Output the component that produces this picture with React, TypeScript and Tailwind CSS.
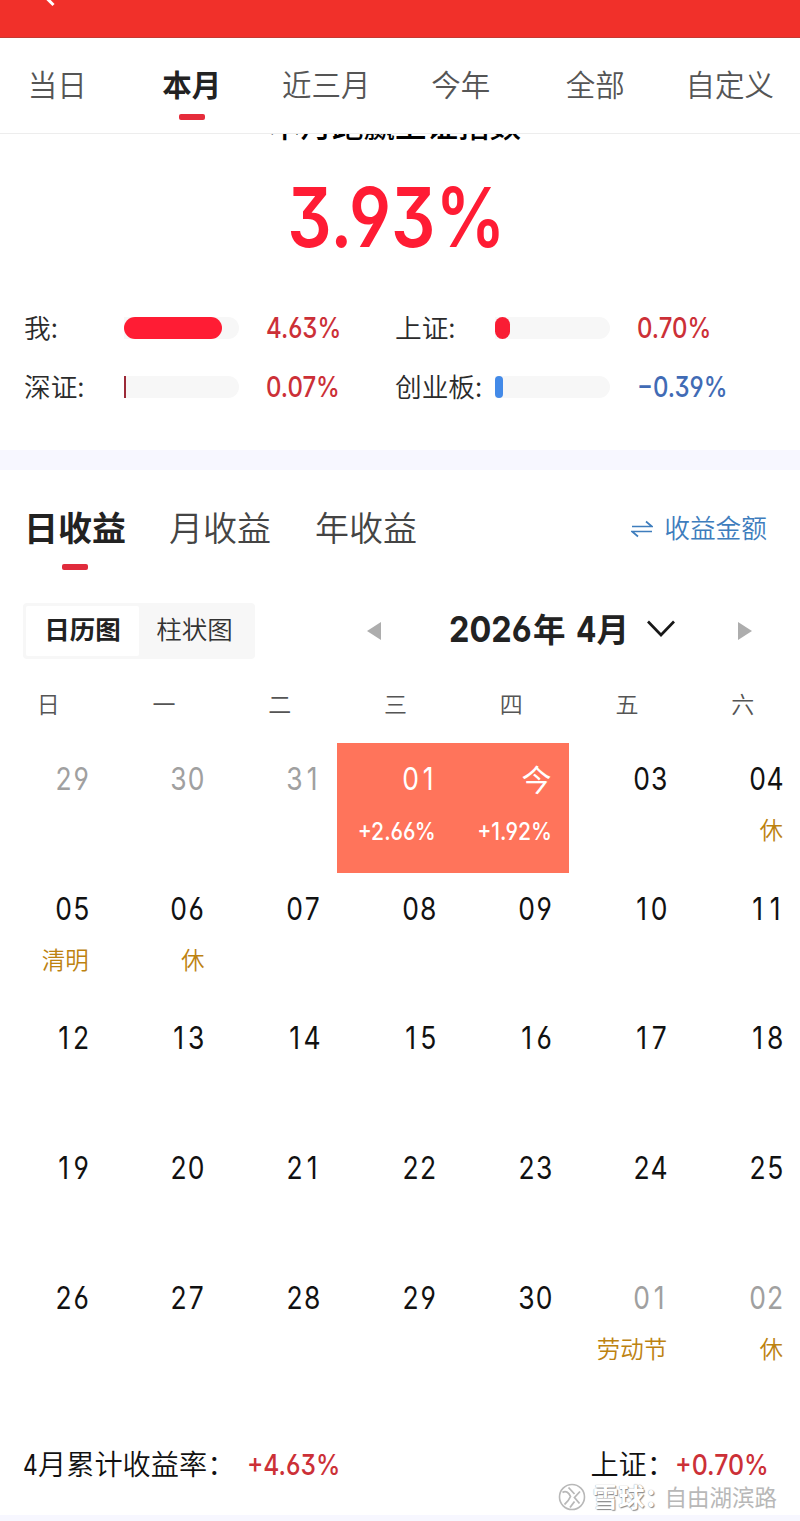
import React from "react";

const periods = ["当日", "本月", "近三月", "今年", "全部", "自定义"];
const weekdays = ["日", "一", "二", "三", "四", "五", "六"];

type Day = { label: string; note?: string; kind?: "muted" | "gain" };

const days: Day[] = [
  { label: "29", kind: "muted" },
  { label: "30", kind: "muted" },
  { label: "31", kind: "muted" },
  { label: "01", note: "+2.66%", kind: "gain" },
  { label: "今", note: "+1.92%", kind: "gain" },
  { label: "03" },
  { label: "04", note: "休" },
  { label: "05", note: "清明" },
  { label: "06", note: "休" },
  ...Array.from({ length: 24 }, (_, i) => ({ label: String(i + 7).padStart(2, "0") })),
  { label: "01", note: "劳动节", kind: "muted" },
  { label: "02", note: "休", kind: "muted" },
];

const numFont =
  "font-['Inter','Noto_Sans_CJK_SC',sans-serif] [font-feature-settings:'cv03','cv04','cv09']";

function Figure({ text, className }: { text: string; className: string }) {
  return (
    <span className={`${numFont} inline-block whitespace-nowrap ${className}`}>
      {text}
    </span>
  );
}

function Stat({ label, value, bar, tone }: { label: string; value: string; bar: string; tone: string }) {
  return (
    <div className="flex h-[58.5px] w-[371px] items-center">
      <span className="w-[100px] whitespace-nowrap pb-px text-[26.7px] font-[350] leading-none text-[#2b2b2b]">{label}</span>
      <div className="h-[22px] w-[115px] overflow-hidden rounded-r-full rounded-l-[9px] bg-[#f7f7f7]">
        <div className={`h-full ${bar}`} />
      </div>
      <Figure text={value} className={`ml-[27px] origin-left scale-x-[0.855] text-[28px] font-medium leading-none ${tone}`} />
    </div>
  );
}

function DayCell({ day }: { day: Day }) {
  const gain = day.kind === "gain";
  const color = gain ? "text-white" : day.kind === "muted" ? "text-[#a0a0a0]" : "text-[#111]";
  return (
    <div className={`flex h-[129.6px] flex-col items-end pr-[16px] ${gain ? "bg-[#ff745b]" : ""}`}>
      {day.label === "今" ? (
        <div className={`mt-[18px] flex h-9 items-center pb-[3px] pr-px text-[30px] leading-none ${color}`}>今</div>
      ) : (
        <div
          className={`mt-[18px] flex h-9 origin-right scale-x-[0.84] items-center font-['Inter',sans-serif] text-[31.5px] leading-none [font-feature-settings:'cv03','cv04'] ${color}`}
        >
          {day.label.split("").map((digit, i) => (
            <span key={i} className="w-[21px] text-center">{digit}</span>
          ))}
        </div>
      )}
      {day.note && (
        <div className="mt-[17px] flex h-8 items-center pr-px">
          {gain ? (
            <Figure text={day.note} className="origin-right scale-x-[0.88] pt-[3px] text-[24px] font-medium leading-none text-white" />
          ) : (
            <span className="text-[23.5px] font-[350] leading-none text-[#bd8210]">{day.note}</span>
          )}
        </div>
      )}
    </div>
  );
}

export default function App() {
  return (
    <div className="flex h-[1521px] w-[800px] flex-col overflow-hidden bg-white font-['Noto_Sans_CJK_SC',sans-serif] text-[#222]">
      <header className="h-[38px] shrink-0 border-b border-[#c53a32] bg-[#f1302a]">
        <svg className="ml-10 block" width="20" height="8" viewBox="0 0 20 8" fill="none">
          <path d="M5.5-3 13.5 5" stroke="white" strokeWidth="3" />
        </svg>
      </header>

      <nav className="-ml-[10px] flex h-[96px] w-[810px] shrink-0 border-b border-[#ededed] pr-[3px]">
        {periods.map((p) => (
          <div key={p} className="flex flex-1 flex-col items-center pt-[30px]">
            <span
              className={`whitespace-nowrap text-[29.5px] leading-[30px] ${
                p === "本月" ? "font-bold text-[#222]" : "font-[350] text-[#555]"
              }`}
            >
              {p}
            </span>
            {p === "本月" && <i className="mt-[16px] h-[6px] w-[26px] rounded-[2px] bg-[#e62c3b]" />}
          </div>
        ))}
      </nav>

      <section className="flex h-[316px] shrink-0 flex-col overflow-hidden">
        <div className="-mt-[25px] h-[33px] shrink-0 pr-[10px] text-center text-[31.5px] font-medium leading-[28px] text-black">
          本月跑赢上证指数
        </div>
        <div className="mt-[35px] flex h-[82px] justify-center pr-[8px]">
          <Figure text="3.93%" className="scale-x-[0.85] text-[82px] font-semibold leading-[82px] text-[#ff1c34]" />
        </div>
        <div className="ml-6 mt-[40px] flex w-[742px] flex-wrap">
          <Stat label="我:" value="4.63%" bar="w-[98px] rounded-full bg-[#ff1c34]" tone="text-[#cc3037]" />
          <Stat label="上证:" value="0.70%" bar="w-[15px] rounded-full bg-[#f91d34]" tone="text-[#cc3037]" />
          <Stat label="深证:" value="0.07%" bar="w-[2px] bg-[#9c2a38]" tone="text-[#cc3037]" />
          <Stat label="创业板:" value="−0.39%" bar="w-[8px] rounded-full bg-[#438ae8]" tone="text-[#416bb5]" />
        </div>
      </section>

      <div className="h-[20px] shrink-0 bg-[#f7f7ff]" />

      <div className="flex h-[133px] shrink-0 items-start pl-6 pr-[33px] pt-[40px] text-[34px] leading-[34px]">
        <div className="flex w-[102px] flex-col items-center">
          <span className="whitespace-nowrap font-bold">日收益</span>
          <i className="mt-[20px] h-[6px] w-[26px] rounded-[2px] bg-[#e02b3c]" />
        </div>
        <span className="ml-[43px] font-[350] text-[#444]">月收益</span>
        <span className="ml-[44px] font-[350] text-[#444]">年收益</span>
        <div className="ml-auto flex items-center gap-[11px] text-[#3e7dbd]">
          <svg className="mt-[3px]" width="22" height="18" viewBox="0 0 22 18" fill="none" stroke="currentColor" strokeWidth="1.7">
            <path d="M1 6.5H21L15 1.5M21 11.5H1L7 16.5" />
          </svg>
          <span className="text-[25.7px] font-[350]">收益金额</span>
        </div>
      </div>

      <div className="flex h-[56px] shrink-0 items-center pl-[23px]">
        <div className="flex h-[56px] w-[232px] rounded-[4px] bg-[#f7f7f7] p-[3px] text-[25.5px] leading-[44px]">
          <div className="w-[113px] rounded-[2px] bg-white text-center font-bold">日历图</div>
          <div className="w-[113px] pr-[2px] text-center font-[350] text-[#333]">柱状图</div>
        </div>
        <svg className="ml-[112px]" width="14" height="18" viewBox="0 0 14 18">
          <path d="M0 9 14 0V18Z" fill="#adadad" />
        </svg>
        <div className="ml-[68px] flex items-center whitespace-nowrap pb-[6px] text-[32.5px] font-bold leading-none">
          <span className="w-[84px] pt-px">
            <span className="inline-block origin-left scale-x-[0.9] font-['Inter',sans-serif] text-[36px] leading-none [font-feature-settings:'cv03','cv04']">2026</span>
          </span>
          <span className="mr-[10px]">年</span>
          <span className="w-[21px] pt-px">
            <span className="inline-block origin-left scale-x-[0.84] font-['Inter',sans-serif] text-[36px] leading-none">4</span>
          </span>
          <span>月</span>
        </div>
        <svg className="-mt-1 ml-[18px]" width="28" height="18" viewBox="0 0 28 18" fill="none">
          <path d="M1 1.5 14 15 27 1.5" stroke="#181818" strokeWidth="2.7" />
        </svg>
        <svg className="ml-auto mr-[48px]" width="14" height="18" viewBox="0 0 14 18">
          <path d="M14 9 0 0V18Z" fill="#adadad" />
        </svg>
      </div>

      <div className="-ml-[10px] grid h-[84px] w-[810px] shrink-0 grid-cols-7 pt-[32px] text-center text-[23px] font-[350] leading-[24px] text-[#555]">
        {weekdays.map((d) => (
          <span key={d} className="pl-px">{d}</span>
        ))}
      </div>

      <div className="-ml-[10px] grid w-[810px] shrink-0 grid-cols-7">
        {days.map((d, i) => (
          <DayCell key={i} day={d} />
        ))}
      </div>

      <footer className="flex h-[124px] shrink-0 flex-col pt-[54px]">
        <div className="flex h-[40px] items-center pl-[23px] text-[28.2px] font-[350] leading-none text-[#111]">
          <span className="flex w-[224px] items-center whitespace-nowrap pb-[3px]">
            <span className="inline-block w-[15px] origin-left scale-x-[0.78] pt-[3px] font-['Inter',sans-serif] text-[29px] font-normal">4</span>月累计收益率：
          </span>
          <Figure text="+4.63%" className="w-[110px] origin-left scale-x-[0.875] text-[28px] font-medium text-[#cc3037]" />
          <span className="ml-auto pb-[3px]">上证：</span>
          <Figure text="+0.70%" className="w-[125px] origin-left scale-x-[0.89] text-[28px] font-medium text-[#cc3037]" />
        </div>
        <div className="-mt-[3px] ml-auto mr-[23px] flex h-[28px] items-center text-[#b8b8b8]">
          <svg className="mt-[3px]" width="28" height="28" viewBox="0 0 28 28" fill="none" stroke="currentColor">
            <circle cx="14" cy="14" r="12.5" strokeWidth="1.6" />
            <path d="M4.5 9.5C8 7 11 10 12.5 13.5C11 17 9 19.5 6.5 21.5M10.5 4.5 16.5 11M22 8.5 16.5 14.5 21.5 20.5M12 24.5 16.5 18.5" strokeWidth="1.8" />
          </svg>
          <span className="ml-[6px] w-[72px] whitespace-nowrap text-[26px] font-bold leading-none text-white [text-shadow:1px_1px_1px_#888,0_0_1px_#888]">雪球：</span>
          <span className="text-[22.5px] leading-none">自由湖滨路</span>
        </div>
      </footer>
      <div className="h-[7px] shrink-0 bg-[#f7f7ff]" />
    </div>
  );
}
